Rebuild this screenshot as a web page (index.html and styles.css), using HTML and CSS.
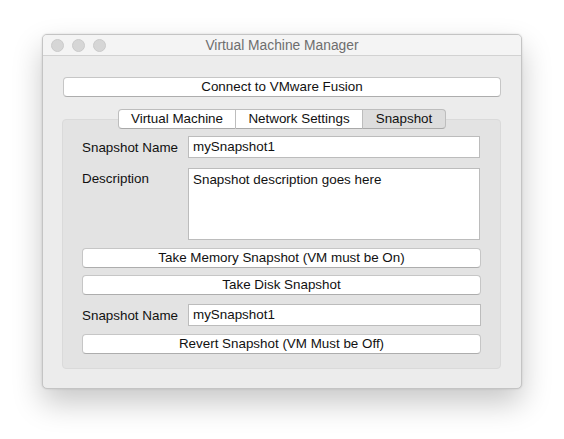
FILE: index.html
```html
<!DOCTYPE html>
<html>
<head>
<meta charset="utf-8">
<link rel="stylesheet" href="styles.css">
</head>
<body>
<div class="window">
  <div class="titlebar">
    <div class="lights"><span class="light"></span><span class="light"></span><span class="light"></span></div>
    <div class="title">Virtual Machine Manager</div>
  </div>
  <div class="content">
    <div class="btn connect">Connect to VMware Fusion</div>
    <div class="tabs">
      <div class="tab">Virtual Machine</div>
      <div class="tab">Network Settings</div>
      <div class="tab selected">Snapshot</div>
    </div>
    <div class="box">
      <div class="row r-name">
        <div class="label">Snapshot Name</div>
        <div class="input">mySnapshot1</div>
      </div>
      <div class="row r-desc">
        <div class="label top">Description</div>
        <div class="input area">Snapshot description goes here</div>
      </div>
      <div class="btn b1">Take Memory Snapshot (VM must be On)</div>
      <div class="btn b2">Take Disk Snapshot</div>
      <div class="row r-name2">
        <div class="label">Snapshot Name</div>
        <div class="input wide">mySnapshot1</div>
      </div>
      <div class="btn b3">Revert Snapshot (VM Must be Off)</div>
    </div>
  </div>
</div>
</body>
</html>
```
FILE: styles.css
```css
html, body {
  margin: 0;
  padding: 0;
  background: #ffffff;
}
body {
  font-family: "Liberation Sans", Arial, sans-serif;
  font-size: 13.4px;
  color: #111111;
  padding: 34px 0 0 42px;
  height: 439px;
  box-sizing: border-box;
  overflow: hidden;
}
.window {
  width: 480px;
  height: 355px;
  box-sizing: border-box;
  background: #ececec;
  border: 1px solid #c4c4c4;
  border-radius: 5px;
  box-shadow: 0 14px 30px rgba(0, 0, 0, 0.22), 0 0 2px rgba(0, 0, 0, 0.15);
  display: flex;
  flex-direction: column;
  overflow: hidden;
}
.titlebar {
  height: 21px;
  box-sizing: border-box;
  background: #f4f4f4;
  border-bottom: 1px solid #d2d2d2;
  display: flex;
  align-items: center;
  position: relative;
}
.lights {
  display: flex;
  gap: 8px;
  padding-left: 8px;
}
.light {
  width: 11px;
  height: 11px;
  border-radius: 50%;
  background: #d6d6d6;
  border: 0.5px solid #cacaca;
}
.title {
  position: absolute;
  left: 0;
  right: 0;
  top: 0;
  line-height: 21px;
  text-align: center;
  color: #6e6e6e;
  font-size: 13.8px;
}
.content {
  padding: 21px 20px 0 20px;
  display: flex;
  flex-direction: column;
}
.btn {
  height: 20px;
  box-sizing: border-box;
  background: #ffffff;
  border: 1px solid #c6c6c6;
  border-bottom-color: #adadad;
  border-radius: 4px;
  text-align: center;
  line-height: 18px;
  color: #111111;
}
.connect {
  margin: 0 0 12px 0;
}
.tabs {
  display: flex;
  justify-content: center;
  margin-bottom: -10px;
  position: relative;
  z-index: 1;
}
.tab {
  height: 20px;
  box-sizing: border-box;
  line-height: 18px;
  background: #ffffff;
  border: 1px solid #bdbdbd;
  border-bottom-color: #a9a9a9;
  border-left: none;
  padding: 0;
  text-align: center;
}
.tab:first-child {
  border-left: 1px solid #bdbdbd;
  border-radius: 4px 0 0 4px;
  width: 118px;
}
.tab:nth-child(2) {
  width: 127px;
}
.tab.selected {
  background: #dddddd;
  border-radius: 0 4px 4px 0;
  width: 83px;
}
.box {
  background: #e3e3e3;
  border: 1px solid #dadada;
  border-radius: 4px;
  height: 250px;
  box-sizing: border-box;
  margin-left: -1px;
  padding: 16px 19px 0 19px;
  display: flex;
  flex-direction: column;
}
.row {
  display: flex;
  align-items: center;
}
.label {
  width: 106px;
  flex: none;
}
.label.top {
  align-self: flex-start;
  padding-top: 3px;
}
.input {
  height: 22px;
  box-sizing: border-box;
  background: #ffffff;
  border: 1px solid #bcbcbc;
  padding: 0 4px;
  line-height: 20px;
  width: 292px;
}
.input.area {
  height: 72px;
  padding-top: 3px;
  line-height: 16px;
}
.input.wide {
  width: 294px;
}
.r-desc {
  margin-top: 10px;
}
.b1 {
  margin-top: 8px;
}
.b2 {
  margin-top: 7px;
}
.r-name2 {
  margin-top: 9px;
}
.b3 {
  margin-top: 8px;
}
```
